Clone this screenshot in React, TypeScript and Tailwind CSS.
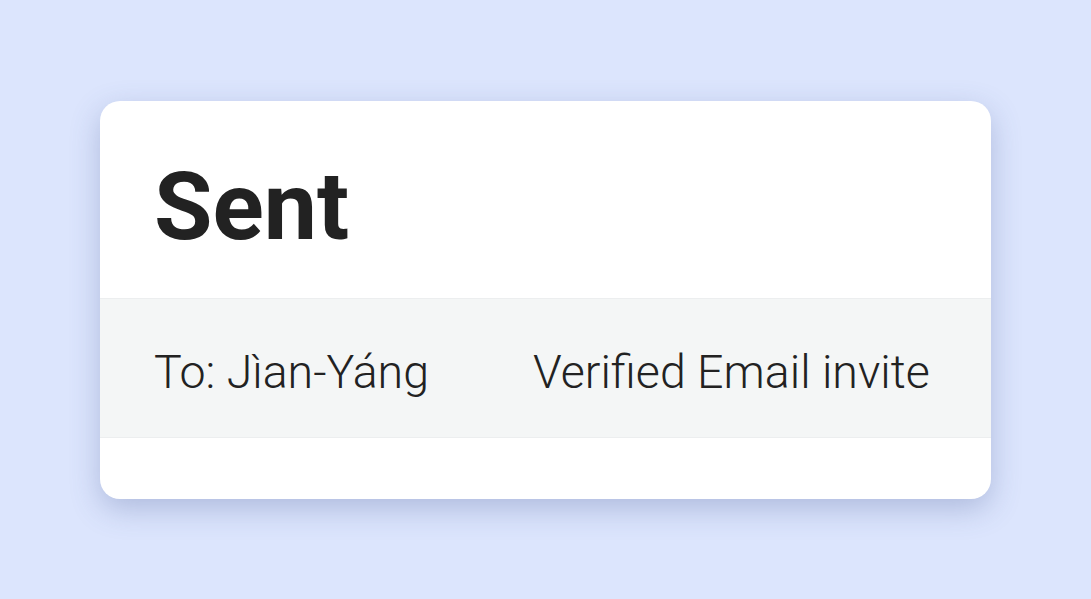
import React from 'react';

const App: React.FC = () => {
  return (
    <div className="min-h-screen w-full bg-[#dce5fd] flex items-center justify-center font-['Roboto',sans-serif]">
      {/* Card */}
      <div className="w-[891px] bg-white rounded-[20px] shadow-[0_10px_30px_rgba(70,90,150,0.3)] overflow-hidden">
        <div className="px-[54px] pt-[58px] pb-[44px]">
          <h1 className="text-[95px] leading-none font-bold text-[#222222]">Sent</h1>
        </div>

        {/* Row */}
        <div className="bg-[#f4f6f6] border-y border-[#eceeef] px-[54px] pt-[37px] pb-[29px] flex items-center">
          <span className="text-[46.5px] leading-[72px] font-light text-[#222222] w-[379px] whitespace-nowrap">
            To: Jìan-Yáng
          </span>
          <span className="text-[46.5px] leading-[72px] font-light text-[#222222] whitespace-nowrap">
            Verified Email invite
          </span>
        </div>

        <div className="h-[61px]" />
      </div>
    </div>
  );
};

export default App;
